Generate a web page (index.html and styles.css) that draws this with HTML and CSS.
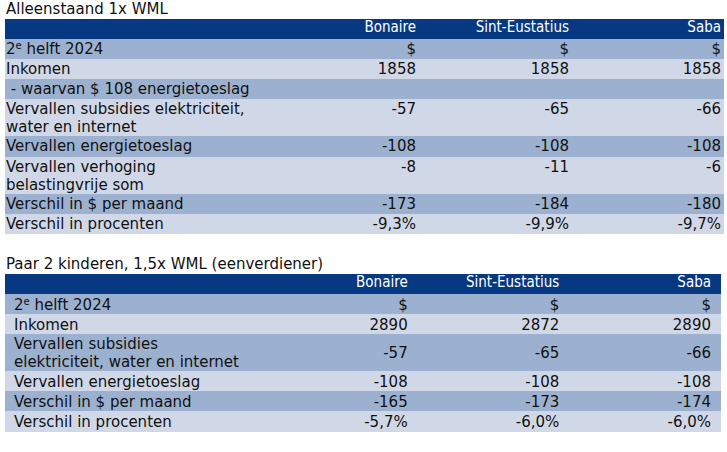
FILE: index.html
```html
<!DOCTYPE html>
<html lang="nl">
<head>
<meta charset="utf-8">
<title>Koopkracht</title>
<link rel="stylesheet" href="styles.css">
</head>
<body>
<div class="page">
  <section class="block">
    <div class="title">Alleenstaand 1x WML</div>
    <table class="grid grid-one">
      <colgroup><col class="c-label1"><col class="c-num1"><col class="c-num1b"><col class="c-num1"></colgroup>
      <tr class="head"><th></th><th>Bonaire</th><th>Sint-Eustatius</th><th>Saba</th></tr>
      <tr class="dark"><td>2<sup>e</sup> helft 2024</td><td>$</td><td>$</td><td>$</td></tr>
      <tr class="light"><td>Inkomen</td><td>1858</td><td>1858</td><td>1858</td></tr>
      <tr class="dark"><td>&nbsp;- waarvan $ 108 energietoeslag</td><td></td><td></td><td></td></tr>
      <tr class="light"><td>Vervallen subsidies elektriciteit,<br>water en internet</td><td>-57</td><td>-65</td><td>-66</td></tr>
      <tr class="dark tall"><td>Vervallen energietoeslag</td><td>-108</td><td>-108</td><td>-108</td></tr>
      <tr class="light"><td>Vervallen verhoging<br>belastingvrije som</td><td>-8</td><td>-11</td><td>-6</td></tr>
      <tr class="dark"><td>Verschil in $ per maand</td><td>-173</td><td>-184</td><td>-180</td></tr>
      <tr class="light"><td>Verschil in procenten</td><td>-9,3%</td><td>-9,9%</td><td>-9,7%</td></tr>
    </table>
  </section>
  <section class="block">
    <div class="title">Paar 2 kinderen, 1,5x WML (eenverdiener)</div>
    <table class="grid grid-two">
      <colgroup><col class="c-label2"><col class="c-num2"><col class="c-num2"><col class="c-num2"></colgroup>
      <tr class="head"><th></th><th>Bonaire</th><th>Sint-Eustatius</th><th>Saba</th></tr>
      <tr class="dark"><td>2<sup>e</sup> helft 2024</td><td>$</td><td>$</td><td>$</td></tr>
      <tr class="light"><td>Inkomen</td><td>2890</td><td>2872</td><td>2890</td></tr>
      <tr class="dark"><td>Vervallen subsidies<br>elektriciteit, water en internet</td><td>-57</td><td>-65</td><td>-66</td></tr>
      <tr class="light"><td>Vervallen energietoeslag</td><td>-108</td><td>-108</td><td>-108</td></tr>
      <tr class="dark"><td>Verschil in $ per maand</td><td>-165</td><td>-173</td><td>-174</td></tr>
      <tr class="light tall"><td>Verschil in procenten</td><td>-5,7%</td><td>-6,0%</td><td>-6,0%</td></tr>
    </table>
  </section>
</div>
</body>
</html>
```
FILE: styles.css
```css
html, body {
  margin: 0;
  padding: 0;
  background: #ffffff;
}
body {
  font-family: "DejaVu Sans", Verdana, sans-serif;
  font-size: 15px;
  color: #111111;
}
.page {
  padding: 0 3px 0 5px;
  display: flex;
  flex-direction: column;
  gap: 21px;
}
.title {
  height: 19px;
  line-height: 18px;
  padding-left: 1px;
  white-space: nowrap;
}
.grid {
  border-collapse: collapse;
  table-layout: fixed;
}
.grid-one { width: 719px; }
.grid-two { width: 716px; }
.c-label1 { width: 262px; }
.c-num1 { width: 152px; }
.c-num1b { width: 153px; }
.c-label2 { width: 261px; }
.c-num2 { width: 151.6px; }
.grid th, .grid td {
  padding: 1px 3px 0 1px;
  line-height: 18px;
  white-space: nowrap;
  text-align: right;
  vertical-align: top;
}
.grid td:first-child {
  text-align: left;
}
.grid-two td {
  vertical-align: middle;
}
.grid-two th, .grid-two td {
  padding-right: 10px;
}
.grid-two td:first-child {
  padding-left: 9px;
}
.head th {
  background: #073882;
  color: #ffffff;
  font-family: "DejaVu Sans Condensed", Tahoma, sans-serif;
  font-weight: normal;
  font-size: 15px;
  height: 20px;
  padding-top: 0;
  padding-bottom: 0;
  line-height: 17px;
}
.dark td { background: #9cb1d0; }
.light td { background: #d0d8e7; }
.grid tr.dark td, .grid tr.light td { height: 19px; }
.grid tr.tall td { height: 20px; }
sup {
  font-size: 10px;
  line-height: 0;
  vertical-align: 5px;
}
```
